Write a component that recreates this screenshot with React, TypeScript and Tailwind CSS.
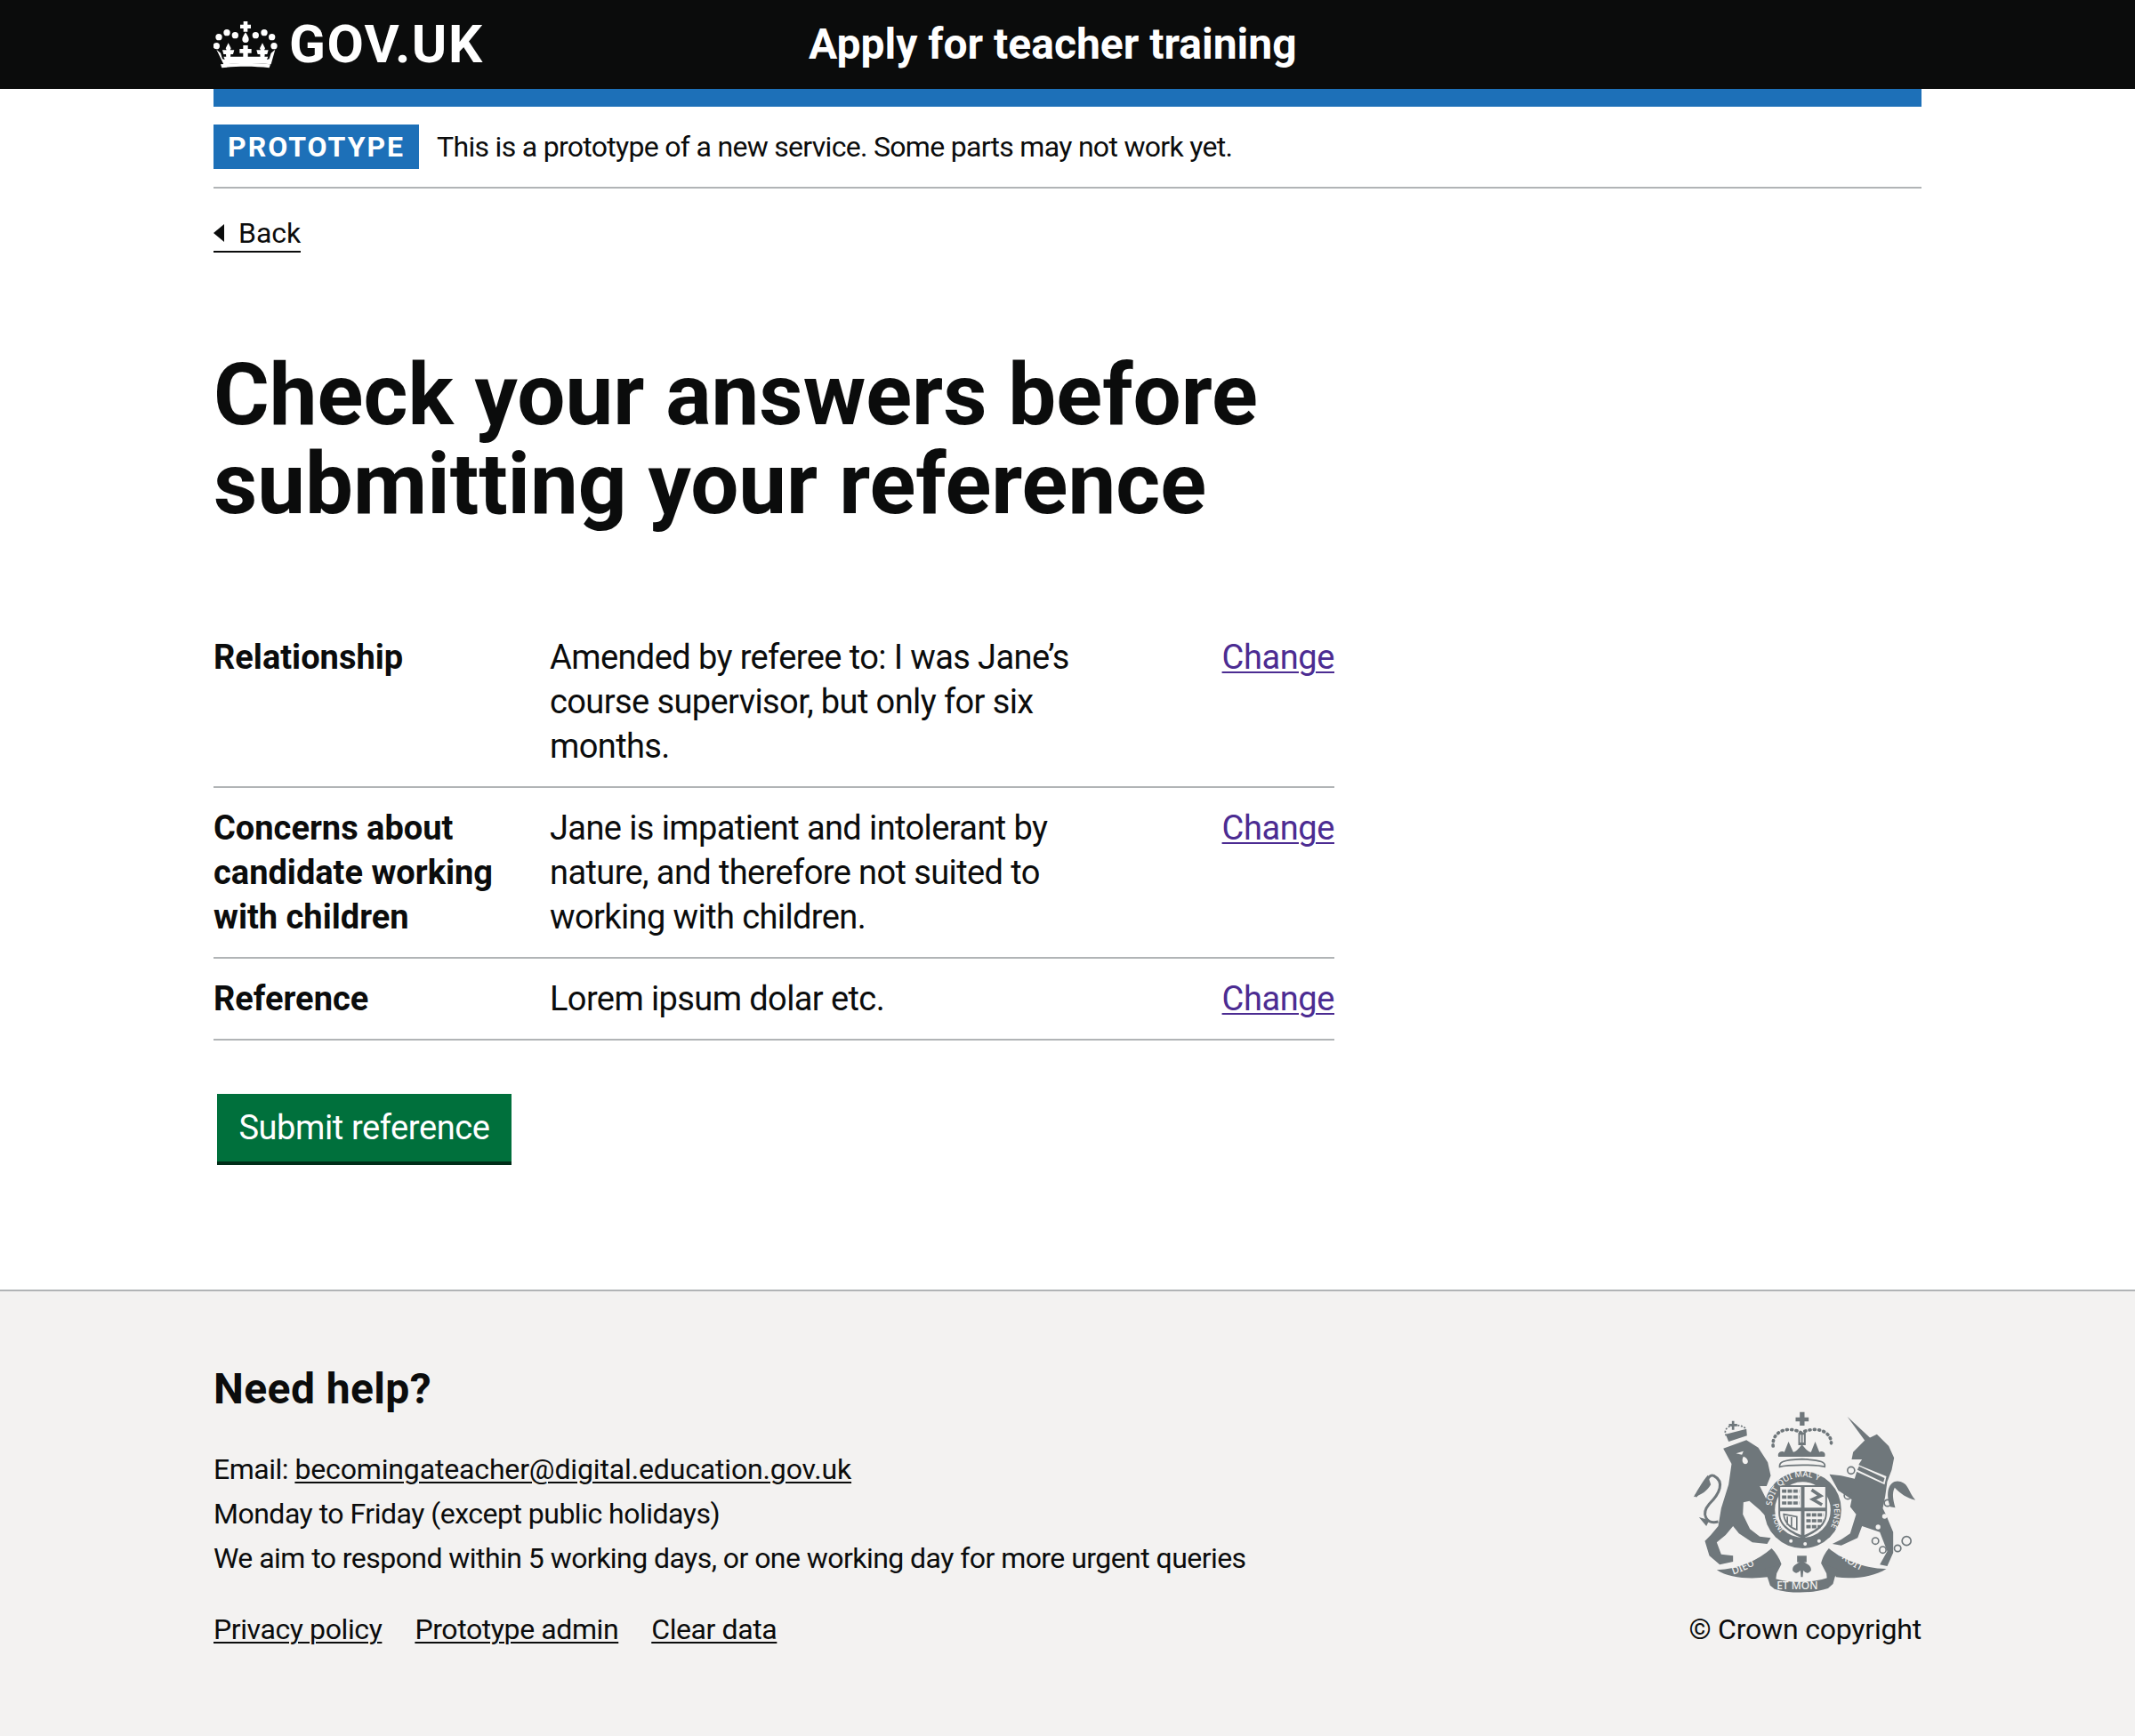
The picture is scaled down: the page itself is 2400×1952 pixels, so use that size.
import React from "react";

const font = "font-['Roboto',_'Noto_Sans',_sans-serif]";
const crestText = "'Noto Sans', sans-serif";

function CrownLogo() {
  const dots = [
    [78, 118, 11], [105, 103, 11], [133, 112, 11], [202, 112, 11], [231, 103, 11], [257, 118, 11], [70, 148, 11], [264, 148, 11],
  ];
  const fleur = "M110 138l9 18-3 6h14l-4 14h-8l-1 12h-14l-1-12h-8l-4-14h14l-3-6z";
  return (
    <svg viewBox="60 62 216 162" className="w-[72px] h-[54px] shrink-0" fill="#fff" aria-hidden="true">
      {dots.map(([cx, cy, r], i) => (
        <circle key={i} cx={cx} cy={cy} r={r} />
      ))}
      <path d="M161 65h14v11h11v13h-11v11h-14V89h-11V76h11z" />
      <path d="M168 102c7 12 11 17 11 24a11 11 0 0 1-22 0c0-7 4-12 11-24z" />
      <path d={fleur} />
      <path d={fleur} transform="translate(115 0)" />
      <path d="M160 146h16v12h12v14h-12v18h-16v-18h-12v-14h12z" />
      <path d="M70 160l14 12 6 20 8 2-4-10 150 0-4 10 8-2 6-20 14-12-14 50c-50-4-110-4-160 0z" />
      <path d="M88 222l-4-12c50-5 115-5 168 0l-4 12c-50-6-110-6-160 0z" />
    </svg>
  );
}

function RoyalCrest() {
  return (
    <svg viewBox="70 50 755 615" className="w-[252px] h-[205px]" fill="#6f777b" aria-hidden="true">
      <defs>
        <path id="garterTop" d="M336 372A106 106 0 0 1 540 340" />
        <path id="garterRight" d="M542 366A106 106 0 0 1 506 478" />
        <path id="garterBottom" d="M338 400A104 104 0 0 0 385 480" />
        <path id="ribbonLeft" d="M205 603Q265 585 312 548" />
        <path id="ribbonRight" d="M552 530Q600 580 672 605" />
      </defs>

      {/* lion */}
      <path d="M172 178L250 150L290 175L322 225L332 270L318 305L295 305L330 375L340 400L320 412L295 385L260 355L240 360L238 400L262 450L295 475L332 480L320 500L270 495L225 465L205 440L180 470L150 495L165 535L205 540L205 560L160 570L125 540L110 490L130 470L155 440L165 380L190 300L200 230Z" />
      <path d="M155 425C115 435 95 400 125 365C160 330 178 290 140 270C118 262 118 300 78 340" fill="none" stroke="#6f777b" strokeWidth="9" />
      <path d="M120 268C105 285 90 310 72 342C100 335 118 320 130 300Z" />
      <path d="M125 420L90 410L115 440Z" />
      <path d="M215 195l25 -8l-5 12zM240 205c15 5 20 20 10 25c-12 3-18-12-10-25z" fill="#f3f2f1" />
      {/* lion crown */}
      <path d="M190 155L180 130L250 112L252 135Z" />
      <path d="M182 135C165 105 215 85 250 112" fill="none" stroke="#6f777b" strokeWidth="5" strokeDasharray="6 5" />
      <path d="M201 85h8v10h10v8h-10v12h-8v-12h-10v-8h10z" />

      {/* unicorn */}
      <path d="M590 70L668 143L652 155Z" />
      <path d="M610 190L650 150L690 130L730 170L748 210L740 250L725 290L718 340L710 380L720 400L745 460L745 530L725 575L700 570L725 525L700 460L640 440L625 480L570 505L540 500L570 485L600 465L620 400L600 375L605 350L560 320L530 265L570 270L615 280L630 230L640 215L605 215Z" />
      <path d="M735 375C715 320 735 280 770 290C800 300 795 325 820 352C790 345 770 330 750 310C740 330 745 350 752 378Z" />
      <path d="M625 232L722 272L716 300L618 255Z" fill="#f3f2f1" />
      <path d="M630 238L716 278L712 292L624 250Z" />
      <g fill="none" stroke="#6f777b" strokeWidth="5">
        <circle cx="603" cy="252" r="12" />
        <circle cx="592" cy="337" r="12" />
        <circle cx="726" cy="362" r="11" />
        <circle cx="685" cy="490" r="11" />
        <circle cx="710" cy="520" r="11" />
        <circle cx="760" cy="515" r="11" />
        <circle cx="790" cy="490" r="15" />
      </g>
      <circle cx="716" cy="407" r="8" fill="#f3f2f1" />
      <circle cx="694" cy="443" r="8" fill="#f3f2f1" />

      {/* crown */}
      <path d="M430 55h16v18h14v14h-14v14h-16v-14h-14v-14h14z" />
      <path d="M425 125h25v42h-25z" />
      <path d="M431 132h4v26h-4zM440 132h4v26h-4z" fill="#f3f2f1" />
      <path d="M340 170C335 120 390 100 435 125C485 100 545 120 535 172" fill="none" stroke="#6f777b" strokeWidth="11" strokeDasharray="3 13" strokeLinecap="round" />
      <path d="M358 206C352 190 370 185 378 190L392 155L408 190C418 190 425 180 437 165C450 180 458 190 468 190L482 155L496 190C504 185 520 190 514 206Z" />
      <path d="M362 240C360 225 370 217 437 214C505 217 518 225 514 240C490 232 390 232 362 240Z" fill="none" stroke="#6f777b" strokeWidth="5" />

      {/* shield and garter */}
      <circle cx="440" cy="385" r="130" />
      <circle cx="440" cy="385" r="94" fill="#f3f2f1" />
      <path d="M358 302H522V395C522 445 475 465 440 482C405 465 358 445 358 395Z" fill="#6f777b" />
      <path d="M364 308H434V378H364ZM446 308H516V378H446ZM446 390H516V398C516 436 478 456 446 470ZM434 390V470C402 456 364 436 364 398V390Z" fill="#f3f2f1" />
      <g fill="none" stroke="#6f777b">
        <path d="M370 322H428M370 342H428M370 362H428M452 402H510M452 422H510M452 442H500" strokeWidth="11" strokeDasharray="15 4" />
        <path d="M470 318L500 338L474 350L505 368" strokeWidth="11" />
        <path d="M376 400L420 408V452C398 446 378 428 376 400ZM388 408V436M402 410V446" strokeWidth="5" />
      </g>
      <text fontFamily={crestText} fontSize="28" fill="#f3f2f1" fontWeight="500">
        <textPath href="#garterTop">SOIT QUI MAL Y</textPath>
      </text>
      <text fontFamily={crestText} fontSize="26" fill="#f3f2f1" fontWeight="500">
        <textPath href="#garterRight">PENSE</textPath>
      </text>
      <text fontFamily={crestText} fontSize="26" fill="#f3f2f1" fontWeight="500">
        <textPath href="#garterBottom">HONI</textPath>
      </text>
      <circle cx="400" cy="490" r="6" fill="#f3f2f1" />
      <circle cx="448" cy="500" r="6" fill="#f3f2f1" />
      <circle cx="495" cy="490" r="6" fill="#f3f2f1" />

      {/* motto ribbon */}
      <path d="M150 588C225 585 290 555 335 515C350 530 362 550 368 568C330 590 320 600 322 612C260 620 190 615 150 588Z" />
      <path d="M722 584C650 585 570 550 528 515C515 530 505 550 502 565C535 590 550 600 552 612C610 620 680 612 722 584Z" />
      <path d="M312 585L368 568L352 600L345 652L330 640Z" />
      <path d="M556 585L502 565L520 600L525 650L542 635Z" />
      <path d="M328 612C390 635 480 635 550 605L525 650C470 668 395 668 345 652Z" />
      <path d="M421 540H453V562H421Z" />
      <path d="M437 555C452 570 470 570 468 590C455 605 448 595 442 590L440 612H434L432 590C425 595 418 605 406 590C404 570 422 570 437 555Z" />
      <text fontFamily={crestText} fontSize="34" fill="#f3f2f1" fontWeight="500">
        <textPath href="#ribbonLeft">DIEU</textPath>
      </text>
      <text fontFamily={crestText} fontSize="34" fill="#f3f2f1" fontWeight="500">
        <textPath href="#ribbonRight">DROIT</textPath>
      </text>
      <text fontFamily={crestText} fontSize="36" fill="#f3f2f1" fontWeight="500" x="352" y="652">ET MON</text>
    </svg>
  );
}

function SummaryRow({ label, children }: { label: React.ReactNode; children: React.ReactNode }) {
  return (
    <div className="flex border-b-2 border-[#b1b4b6]">
      <dt className="w-[378px] shrink-0 pr-[40px] py-[20px] font-bold">{label}</dt>
      <dd className="w-[630px] shrink-0 pr-[40px] py-[20px] tracking-[-0.6px]">{children}</dd>
      <dd className="flex-1 py-[20px] text-right tracking-[-0.4px]">
        <a href="#" className="text-[#4c2c92] underline underline-offset-[3px] decoration-2">Change</a>
      </dd>
    </div>
  );
}

export default function App() {
  return (
    <div className={`${font} min-h-[1952px] flex flex-col bg-white text-[#0b0c0c] text-[38px] leading-[50px]`}>
      <header className="h-[100px] bg-[#0b0c0c] text-white">
        <div className="mx-[240px] h-full flex items-center">
          <a href="#" className="flex items-center gap-[13px] w-[669px]">
            <CrownLogo />
            <span className="text-[60px] font-bold leading-none tracking-[1.5px]">GOV.UK</span>
          </a>
          <span className="text-[48px] font-bold leading-none">Apply for teacher training</span>
        </div>
      </header>

      <div className="mx-[240px]">
        <div className="h-[20px] bg-[#1d70b8]" />
        <div className="flex items-center gap-[20px] py-[20px] border-b-2 border-[#b1b4b6]">
          <strong className="h-[50px] px-[16px] flex items-center bg-[#1d70b8] text-white text-[32px] font-bold tracking-[2px]">PROTOTYPE</strong>
          <span className="text-[32px] tracking-[-0.7px]">This is a prototype of a new service. Some parts may not work yet.</span>
        </div>

        <a href="#" className="mt-[30px] inline-flex items-center gap-[16px] text-[32px] leading-[40px] border-b-2 border-[#0b0c0c]">
          <span className="w-0 h-0 border-y-[10px] border-y-transparent border-r-[12px] border-r-[#0b0c0c]" />
          Back
        </a>

        <main className="mt-[110px]">
          <h1 className="text-[96px] leading-[100px] font-bold mb-[100px]">
            Check your answers before
            <br />
            submitting your reference
          </h1>

          <dl className="w-[1260px]">
            <SummaryRow label="Relationship">Amended by referee to: I was Jane’s course supervisor, but only for six months.</SummaryRow>
            <SummaryRow label="Concerns about candidate working with children">Jane is impatient and intolerant by nature, and therefore not suited to working with children.</SummaryRow>
            <SummaryRow label="Reference">Lorem ipsum dolar etc.</SummaryRow>
          </dl>

          <button className="mt-[60px] ml-[4px] h-[80px] w-[331px] flex items-center justify-center bg-[#00703c] border-b-4 border-[#002d18] text-white text-[38px] tracking-[-0.4px]">
            Submit reference
          </button>
        </main>
      </div>

      <footer className="mt-[140px] flex-1 bg-[#f3f2f1] border-t-2 border-[#b1b4b6] text-[32px]">
        <div className="mx-[240px] pt-[80px] flex justify-between items-end">
          <div className="tracking-[-0.5px]">
            <h2 className="text-[48px] leading-[60px] font-bold mb-[35px] tracking-[0.4px]">Need help?</h2>
            <p>Email: <a href="#" className="underline underline-offset-[3px] decoration-2 tracking-[-0.15px]">becomingateacher@digital.education.gov.uk</a></p>
            <p>Monday to Friday (except public holidays)</p>
            <p className="tracking-[-0.55px]">We aim to respond within 5 working days, or one working day for more urgent queries</p>
            <ul className="mt-[30px] flex gap-[37px] tracking-[-0.4px]">
              <li><a href="#" className="underline underline-offset-[3px] decoration-2">Privacy policy</a></li>
              <li><a href="#" className="underline underline-offset-[3px] decoration-2">Prototype admin</a></li>
              <li><a href="#" className="underline underline-offset-[3px] decoration-2">Clear data</a></li>
            </ul>
          </div>
          <div className="flex flex-col items-end">
            <div className="mr-[5px] mb-[16px]"><RoyalCrest /></div>
            <span className="tracking-[-0.2px]">© Crown copyright</span>
          </div>
        </div>
      </footer>
    </div>
  );
}
